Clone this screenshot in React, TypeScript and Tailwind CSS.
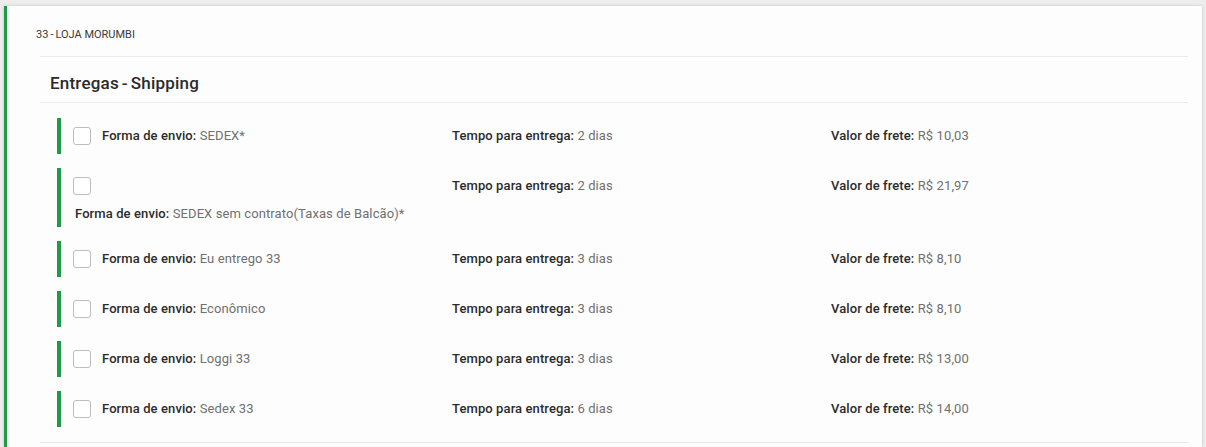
import React from "react";

type Opcao = {
  forma: string;
  tempo: string;
  valor: string;
  quebra?: boolean;
};

const OPCOES: Opcao[] = [
  { forma: "SEDEX*", tempo: "2 dias", valor: "R$ 10,03" },
  { forma: "SEDEX sem contrato(Taxas de Balcão)*", tempo: "2 dias", valor: "R$ 21,97", quebra: true },
  { forma: "Eu entrego 33", tempo: "3 dias", valor: "R$ 8,10" },
  { forma: "Econômico", tempo: "3 dias", valor: "R$ 8,10" },
  { forma: "Loggi 33", tempo: "3 dias", valor: "R$ 13,00" },
  { forma: "Sedex 33", tempo: "6 dias", valor: "R$ 14,00" },
];

function Checkbox()
{
  return <span className="block w-[18px] h-[18px] shrink-0 rounded-[3px] border border-[#bdbdbd] bg-white" />;
}

function Campo({ label, valor }: { label: string; valor: string })
{
  return (
    <span className="text-[13px] leading-[18px] whitespace-nowrap tracking-[0.1px]">
      <span className="font-medium text-[#2b2b2b]">{label}</span>{" "}
      <span className="text-[#707070]">{valor}</span>
    </span>
  );
}

function Linha({ opcao }: { opcao: Opcao })
{
  return (
    <div className={`flex items-start border-l-4 border-[#1f9a48] pt-[9px] ${opcao.quebra ? "h-[59px]" : "h-[36px]"}`}>
      <div className="w-[391px] pl-[12px]">
        {opcao.quebra ? (
          <div className="flex flex-col">
            <Checkbox />
            <div className="mt-[6px] pl-[2px]">
              <Campo label="Forma de envio:" valor={opcao.forma} />
            </div>
          </div>
        ) : (
          <div className="flex items-center gap-[11px]">
            <Checkbox />
            <Campo label="Forma de envio:" valor={opcao.forma} />
          </div>
        )}
      </div>
      <div className="w-[379px] h-[18px] flex items-center">
        <Campo label="Tempo para entrega:" valor={opcao.tempo} />
      </div>
      <div className="flex-1 h-[18px] flex items-center">
        <Campo label="Valor de frete:" valor={opcao.valor} />
      </div>
    </div>
  );
}

export default function App()
{
  return (
    <div className="h-[447px] w-[1206px] overflow-hidden bg-[#ededed] pt-[6px] pl-[4px] pr-[4px]" style={{ fontFamily: "Roboto, 'Liberation Sans', sans-serif" }}>
      <div className="h-full bg-[#fdfdfd] border-l-[3px] border-[#1f9a48] shadow-[0_0_3px_rgba(0,0,0,0.18)]">
        <div className="h-[50px] pl-[29px] pt-[22px]">
          <div className="text-[11px] leading-[14px] uppercase text-[#3a3a3a]">
            33<span className="mx-[2px]">-</span>Loja Morumbi
          </div>
        </div>
        <div className="ml-[33px] mr-[14px] border-t border-[#ececec]">
          <div className="pl-[10px] pt-[14px] pb-[7px] border-b border-[#ececec]">
            <h2 className="text-[17px] leading-[24px] font-medium text-[#2a2a2a] tracking-[0.2px]">
              Entregas<span className="mx-[3px]">-</span>Shipping
            </h2>
          </div>
          <div className="pl-[17px] pt-[15px] pb-[15px] flex flex-col gap-[14px] border-b border-[#e6e6e6]">
            {OPCOES.map((o) => (
              <Linha key={o.forma} opcao={o} />
            ))}
          </div>
        </div>
      </div>
    </div>
  );
}
